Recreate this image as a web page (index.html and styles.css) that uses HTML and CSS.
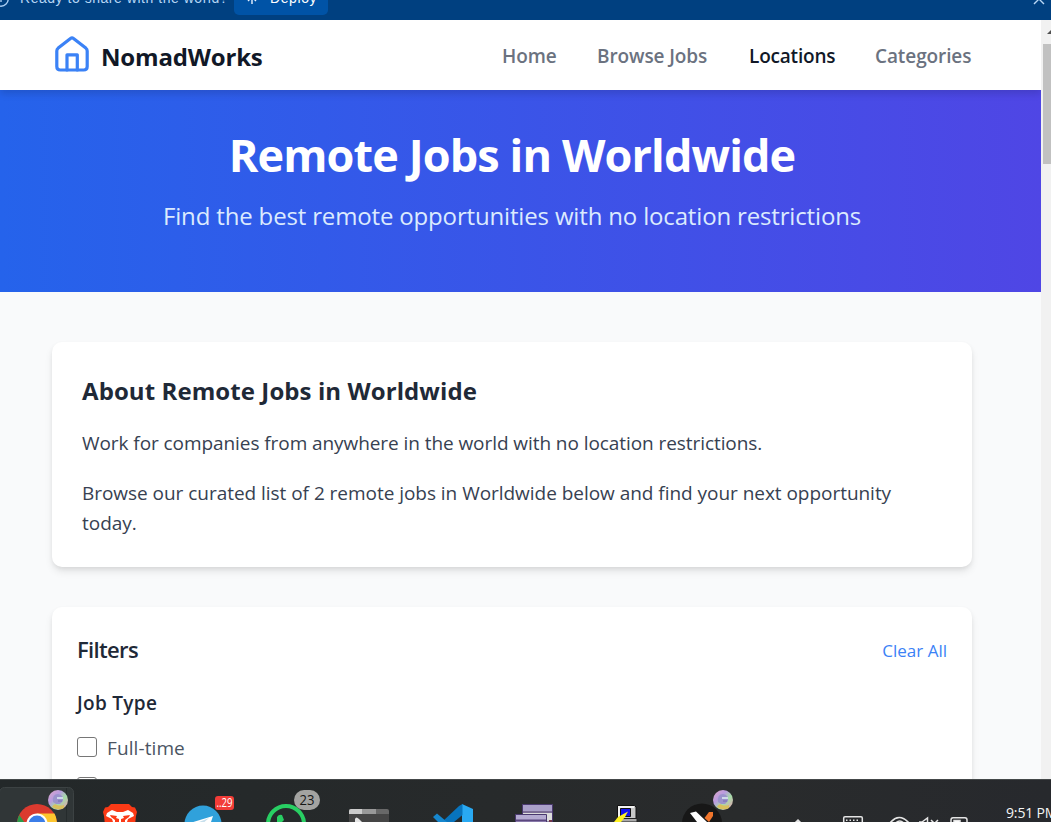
FILE: index.html
```html
<!DOCTYPE html>
<html lang="en">
<head>
<meta charset="utf-8">
<title>NomadWorks</title>
<link rel="stylesheet" href="styles.css">
</head>
<body>
<div class="deploy-bar">
  <svg class="info" width="10" height="20" viewBox="0 0 10 20" fill="none" stroke="#a9cdf2" stroke-width="1.4"><circle cx="1" cy="-1" r="7.2"/><path d="M1-4v6"/></svg>
  <span class="deploy-text">Ready to share with the world?</span>
  <span class="deploy-btn"><svg width="12" height="20" viewBox="0 0 12 20" fill="none" stroke="#e8f2ff" stroke-width="1.4"><path d="M6-6v10M2 1l4-4 4 4"/></svg><span>Deploy</span></span>
  <svg class="close" width="12" height="20" viewBox="0 0 12 20" fill="none" stroke="#b9d7f5" stroke-width="1.4"><path d="M1 4L11-6M1-6L11 4"/></svg>
</div>
<div class="viewport">
  <div class="page">
    <header class="site-header">
      <svg class="logo" width="40" height="40" viewBox="0 0 40 40" fill="none" stroke="#3b82f6" stroke-width="3.2" stroke-linejoin="round" stroke-linecap="round"><path d="M4.8 16Q4.8 14.300 6.200 13.100L18.500 3.500Q20 2.400 21.500 3.500L33.800 13.100Q35.200 14.300 35.200 16V31.500Q35.200 35 31.700 35H8.300Q4.800 35 4.800 31.500Z"/><path d="M15 35V19.800H25.300V35"/></svg>
      <span class="brand">NomadWorks</span>
      <nav class="nav"><a class="n1">Home</a><a class="n2">Browse Jobs</a><a class="n3 active">Locations</a><a class="n4">Categories</a></nav>
    </header>
    <section class="hero">
      <h1><span>Remote Jobs in Worldwide</span></h1>
      <p>Find the best remote opportunities with no location restrictions</p>
    </section>
    <main class="content">
      <section class="card about">
        <h2>About Remote Jobs in Worldwide</h2>
        <p class="p1">Work for companies from anywhere in the world with no location restrictions.</p>
        <p class="p2">Browse our curated list of 2 remote jobs in Worldwide below and find your next opportunity<br>today.</p>
      </section>
      <section class="card filters">
        <div class="filters-head"><h3>Filters</h3><a>Clear All</a></div>
        <h4>Job Type</h4>
        <label class="option"><span class="box"></span><span class="label">Full-time</span></label>
        <div class="option"><span class="box"></span></div>
      </section>
    </main>
  </div>
  <div class="scrollbar"><svg width="10" height="24" viewBox="0 0 10 24"><path d="M6 14l5-5v5z" fill="#505050"/></svg><div class="thumb"></div></div>
</div>
<footer class="taskbar">
  <div class="apps">
    <svg class="app" viewBox="0 0 83 43">
      <defs><linearGradient id="av" x2="1" y2="1"><stop stop-color="#e0a8c4"/><stop offset=".35" stop-color="#b99be0"/><stop offset=".6" stop-color="#a5dba8"/><stop offset="1" stop-color="#ee9bb2"/></linearGradient>
      <g id="avatar"><circle r="10" fill="url(#av)"/><path d="M-5 2Q-6-6 0-6Q6-5 5 1L2 4H-2Z" fill="#9b93cc"/><path d="M-6 7Q-4 3-1 5Q3 6 6 5L6 8Q0 11-6 7" fill="#d8c05d"/><path d="M-1-2H5" stroke="#cfd8ea" stroke-width="2"/><path d="M0 1H4" stroke="#756db0"/></g></defs>
      <rect x="4.500" y="8.500" width="74" height="40" rx="5" fill="#303637" stroke="#3c4243"/>
      <path d="M71.500 9V43" stroke="#252b2c"/>
      <circle cx="42" cy="45" r="20" fill="#db3a2f"/><path d="M42 34.500H59.500Q62 39 62 45H42Z" fill="#fdc62f"/><path d="M24.300 36L34 50H22V45Q22 40 24.300 36" fill="#2a9b4b"/>
      <circle cx="42" cy="45" r="10.600" fill="#fff"/><circle cx="42" cy="45" r="8.400" fill="#3b7de8"/>
      <use href="#avatar" x="63" y="21"/>
    </svg>
    <svg class="app" viewBox="0 0 83 43">
      <path d="M33 25H51L54 28L57 28.500L59 33L58 37L57 46H27L26 37L25 33L27 28.500L30 28Z" fill="#fb3a16"/>
      <path d="M29 34L34 31L39 33H45L50 31L55 34L56 37L50 40L49 43H35L34 40L28 37Z" fill="#fff"/><path d="M32 36L39 37L38 39L41 40V46H37L37 41L33 38ZM52 36L45 37L46 39L43 40V46H47L47 41L51 38Z" fill="#fb3a16"/>
    </svg>
    <svg class="app" viewBox="0 0 83 43">
      <circle cx="42" cy="45" r="18.500" fill="#30a1db"/><path d="M29 44L52 37L49 46H34Z" fill="#fff"/><path d="M38 43L48 39L40 46" fill="#c7dfec"/>
      <rect x="54" y="17" width="19" height="14" rx="3" fill="#f23c38"/><text x="55.500" y="28" class="badge-small" textLength="16" lengthAdjust="spacingAndGlyphs">..29</text>
    </svg>
    <svg class="app" viewBox="0 0 83 43">
      <circle cx="42" cy="45" r="18" fill="#252a2b" stroke="#28cf63" stroke-width="4"/><path d="M33 43V38Q35 35 38 36L40 41L38 43Z" fill="#28cf63"/>
      <rect x="50" y="11" width="26" height="20" rx="10" fill="#a3a3a1"/><text x="55.500" y="26.200" class="badge-large" textLength="15" lengthAdjust="spacingAndGlyphs">23</text>
    </svg>
    <svg class="app" viewBox="0 0 83 43">
      <path d="M22 35V32Q22 30 24 30H60Q62 30 62 32V35Z" fill="#686868"/><path d="M22 35V32Q22 30 24 30H35V35Z" fill="#ccc"/><path d="M35 30H49V35H35Z" fill="#999"/><path d="M22 35H62V43H22Z" fill="#454545"/><path d="M28 43V40Q29 37 32 40L35 43Z" fill="#e5e5e5"/>
    </svg>
    <svg class="app" viewBox="0 0 83 43">
      <path d="M52 25L63 30V43H52Z" fill="#29a9f2"/><path d="M52.500 25V36L44 43H32L49 27Z" fill="#0874bd"/><path d="M23 38L27 34.500L37 43H28Z" fill="#1687ce"/>
    </svg>
    <svg class="app" viewBox="0 0 83 43">
      <path d="M29.500 25.500H59.500V43H29.500Z" fill="#ddd" stroke="#49386e"/><path d="M30 26H59V32H30Z" fill="#aaa0c9"/><path d="M30 33H59" stroke="#5b477e" stroke-width="1.500"/><path d="M22.500 35.500H53.500V45H22.500Z" fill="#b4aad1" stroke="#49386e"/><path d="M23 41.500H53" stroke="#5b477e" stroke-width="2"/><path d="M56 41h3v2h-3z" fill="#76394b"/>
    </svg>
    <svg class="app" viewBox="0 0 83 43">
      <path d="M41.500 26.500H58.500L60 28V40L57 43H41.500Z" fill="#c7c7c7" stroke="#111"/><path d="M42 27H58V29H44V40H42Z" fill="#f2f2f2"/><path d="M44.500 29.500H54.500V37.500H44.500Z" fill="#1313ed" stroke="#111"/><path d="M43 39.500H61V43H43Z" fill="#aaa" stroke="#222"/><path d="M52 32.500L42 38L38 43H45L49 38Z" fill="#fff222"/>
    </svg>
    <svg class="app" viewBox="0 0 83 43">
      <circle cx="43" cy="44.500" r="20" fill="#171717"/><path d="M31 34L37 32.500L48 43H38Z" fill="#fff"/><path d="M54 33H50L45.500 39L50 43L54 37Z" fill="#f1752b"/><use href="#avatar" x="64" y="21"/>
    </svg>
  </div>
  <div class="tray">
    <svg width="190" height="43" viewBox="0 0 190 43" fill="none" stroke="#e4e4e4" stroke-width="1.500">
      <path d="M15 44L18 41L21 44"/>
      <path d="M63.700 48V39Q63.700 37.700 65 37.700H81Q82.300 37.700 82.300 39V48"/><path d="M66 41.200H80" stroke-dasharray="1.500 2"/>
      <path d="M110 44Q119 33 129 44M114 46Q120 38 125 46" stroke-width="1.700"/>
      <path d="M139 43H142L147.500 39V45M151 41L156 46M158 41L154 45"/>
      <path d="M171 46V41Q171 38.700 173 38.700H185Q187 38.700 187 41V46"/><path d="M174 41.500H180V44H174Z" fill="#fff"/>
    </svg>
    <span class="clock">9:51 PM</span>
  </div>
</footer>
</body>
</html>
```

FILE: styles.css
```css
* { box-sizing: border-box; margin: 0; padding: 0; }
body { width: 1051px; height: 822px; overflow: hidden; display: flex; flex-direction: column; font-family: "Open Sans", "Noto Sans", sans-serif; white-space: nowrap; background: #f9fafb; }
svg { display: block; flex: none; }

.deploy-bar { height: 20px; flex: none; overflow: hidden; display: flex; background: #004080; color: #b5d6f5; font: 14px/20px "Liberation Sans", sans-serif; }
.info { margin-right: 10px; }
.deploy-text { width: 214px; margin-top: -12px; letter-spacing: .53px; }
.deploy-btn { width: 94px; height: 15px; padding-left: 12px; display: flex; gap: 12px; background: #0053a6; border-radius: 0 0 5px 5px; color: #fff; letter-spacing: .6px; }
.deploy-btn span { margin-top: -12px; }
.close { margin-left: auto; margin-right: 6px; }

.viewport { height: 759px; flex: none; display: flex; overflow: hidden; }
.page { width: 1041px; overflow: hidden; background: #f9fafb; }
.scrollbar { width: 10px; background: #f1f1f1; padding-left: 2px; }
.scrollbar svg { margin-left: -2px; }
.thumb { height: 120px; background: #c1c1c1; }

.site-header { height: 70px; display: flex; align-items: center; padding: 0 69px 0 52px; background: #fff; position: relative; box-shadow: 0 4px 7px rgba(0, 0, 0, .13); }
.logo { margin-top: -1px; }
.brand { margin: 3px 0 0 9px; font-size: 24px; font-weight: 700; color: #111827; letter-spacing: -.18px; }
.nav { margin-left: auto; display: flex; gap: 40px; font-size: 19px; font-weight: 600; color: #6b7280; margin-top: 2px; }
.nav .active { color: #111827; }
.n1 { width: 55px; }
.n2 { width: 112px; }
.n3 { width: 86px; }
.n4 { width: 97px; }
.nav a { letter-spacing: -.1px; }
.nav .n3 { letter-spacing: -.2px; }

.hero { height: 202px; padding: 34px 17px 0 0; text-align: center; color: #fff; background: linear-gradient(90deg, #2563eb, #4f46e5); }
.hero h1 { font-size: 45px; line-height: 62px; font-weight: 700; letter-spacing: -.88px; }
.hero p { margin-top: 12px; font-size: 24px; line-height: 36px; color: #dbeafe; letter-spacing: -.16px; }

.content { padding: 50px 69px 0 52px; }
.card { background: #fff; border-radius: 10px; box-shadow: 0 5px 8px -1px rgba(0, 0, 0, .1), 0 2px 5px -1px rgba(0, 0, 0, .08); }
.about { height: 225px; padding: 29px 30px; color: #374151; font-size: 19px; line-height: 30px; }
.about h2 { font-size: 24px; line-height: 40px; font-weight: 700; color: #1f2937; letter-spacing: .08px; }
.about p { margin-top: 20px; letter-spacing: -.035px; }
.about .p1 { margin-top: 17px; letter-spacing: -.07px; }

.filters { margin-top: 40px; height: 300px; padding: 25px; color: #1f2937; }
.filters-head { display: flex; align-items: center; justify-content: space-between; height: 36px; }
.filters h3 { margin-top: -2px; font-size: 22px; font-weight: 600; letter-spacing: -.65px; }
.filters-head a { font-size: 17px; color: #3b82f6; }
.filters h4 { margin-top: 20px; font-size: 19px; line-height: 30px; font-weight: 600; letter-spacing: .3px; }
.option { display: flex; align-items: center; gap: 10px; height: 30px; margin-top: 10px; color: #4b5563; font-size: 19px; }
h4 + .option { margin-top: 14px; }
.label { margin-top: 1px; letter-spacing: .1px; }
.box { width: 20px; height: 20px; border: 1px solid #767676; border-radius: 3px; margin-top: -1px; }

.taskbar { height: 43px; flex: none; overflow: hidden; display: flex; background: linear-gradient(90deg, #232829, #292b2c 70%, #27292d); box-shadow: inset 0 1px #444849; }
.apps { display: flex; margin-left: -5px; }
.app { width: 83px; height: 43px; }
.badge-small { font: 12px "Open Sans", sans-serif; fill: #fff; }
.badge-large { font: 14px "Open Sans", sans-serif; fill: #161616; }
.tray { display: flex; margin-left: 38px; }
.clock { margin-left: 36px; padding-top: 24px; font-size: 14px; line-height: 20px; color: #f5f5f5; letter-spacing: -.15px; }
```
